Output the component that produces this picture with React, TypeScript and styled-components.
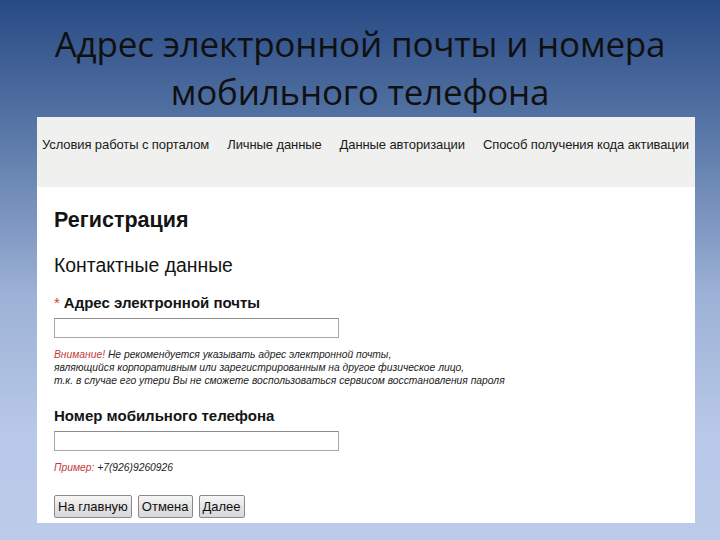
import React from 'react';
import styled, { createGlobalStyle } from 'styled-components';

const GlobalStyle = createGlobalStyle`
  html, body {
    margin: 0;
    padding: 0;
  }
  body {
    width: 720px;
    height: 540px;
    overflow: hidden;
    font-family: "Liberation Sans", Arial, sans-serif;
  }
`;

const Slide = styled.div`
  width: 720px;
  height: 540px;
  box-sizing: border-box;
  display: flex;
  flex-direction: column;
  align-items: center;
  background: linear-gradient(180deg, #284a84 0%, #5a78a8 25%, #9db2d6 55%, #b8c8e8 80%, #bccbea 100%);
`;

const Title = styled.h1`
  margin: 20px 0 0;
  font-family: "Open Sans", "Noto Sans", sans-serif;
  font-weight: 400;
  font-size: 35px;
  line-height: 48px;
  color: #101010;
  text-align: center;
  letter-spacing: -0.2px;
`;

const Panel = styled.div`
  align-self: flex-start;
  width: 658px;
  height: 406px;
  margin: 1px 0 0 37px;
  background: #ffffff;
  display: flex;
  flex-direction: column;
`;

const NavBar = styled.nav`
  height: 70px;
  background: #f0f0ee;
  display: flex;
  align-items: flex-start;
  gap: 18px;
  padding: 20px 0 0 5px;
  box-sizing: border-box;
`;

const NavItem = styled.span`
  font-size: 13px;
  color: #1a1a1a;
  white-space: nowrap;
  letter-spacing: -0.1px;
`;

const Form = styled.div`
  padding: 20px 17px 0;
  display: flex;
  flex-direction: column;
`;

const Heading = styled.h2`
  margin: 0;
  font-size: 21.5px;
  font-weight: 700;
  color: #141414;
  line-height: 26px;
`;

const SubHeading = styled.h3`
  margin: 20px 0 0;
  font-size: 19.4px;
  font-weight: 400;
  color: #141414;
  line-height: 24px;
`;

const Label = styled.label<{ $top: number }>`
  display: block;
  margin-top: ${p => p.$top}px;
  font-size: 15px;
  font-weight: 700;
  color: #141414;
  line-height: 18px;
`;

const Required = styled.span`
  color: #d04040;
  font-weight: 400;
  margin-right: 4px;
`;

const Input = styled.input`
  display: block;
  margin-top: 6px;
  width: 285px;
  height: 20px;
  box-sizing: border-box;
  border: 1px solid #a9a9a9;
  border-top-color: #8c8c8c;
  background: #fff;
  padding: 0 2px;
`;

const Note = styled.p<{ $top: number }>`
  margin: ${p => p.$top}px 0 0;
  font-size: 10.3px;
  font-style: italic;
  line-height: 13px;
  color: #222;
  white-space: nowrap;
`;

const Accent = styled.span`
  color: #c43a3a;
`;

const Buttons = styled.div`
  display: flex;
  gap: 6px;
  margin-top: 21px;
`;

const Button = styled.button`
  font-family: "Liberation Sans", Arial, sans-serif;
  font-size: 13px;
  color: #111;
  height: 23px;
  padding: 0 3px;
  border: 1px solid #8a8a8a;
  border-radius: 2px;
  background: linear-gradient(180deg, #f6f6f6 0%, #e4e4e4 50%, #d8d8d8 100%);
`;

const navItems = [
  'Условия работы с порталом',
  'Личные данные',
  'Данные авторизации',
  'Способ получения кода активации',
];

const App: React.FC = () => {
  return (
    <>
      <GlobalStyle />
      <Slide>
        <Title>
          Адрес электронной почты и номера
          <br />
          мобильного телефона
        </Title>
        <Panel>
          <NavBar>
            {navItems.map(item => (
              <NavItem key={item}>{item}</NavItem>
            ))}
          </NavBar>
          <Form>
            <Heading>Регистрация</Heading>
            <SubHeading>Контактные данные</SubHeading>
            <Label $top={17}>
              <Required>*</Required>Адрес электронной почты
            </Label>
            <Input type="text" />
            <Note $top={10}>
              <Accent>Внимание!</Accent> Не рекомендуется указывать адрес электронной почты,
              <br />
              являющийся корпоративным или зарегистрированным на другое физическое лицо,
              <br />
              т.к. в случае его утери Вы не сможете воспользоваться сервисом восстановления пароля
            </Note>
            <Label $top={20}>Номер мобильного телефона</Label>
            <Input type="text" />
            <Note $top={10}>
              <Accent>Пример:</Accent> +7(926)9260926
            </Note>
            <Buttons>
              <Button>На главную</Button>
              <Button>Отмена</Button>
              <Button>Далее</Button>
            </Buttons>
          </Form>
        </Panel>
      </Slide>
    </>
  );
};

export default App;
